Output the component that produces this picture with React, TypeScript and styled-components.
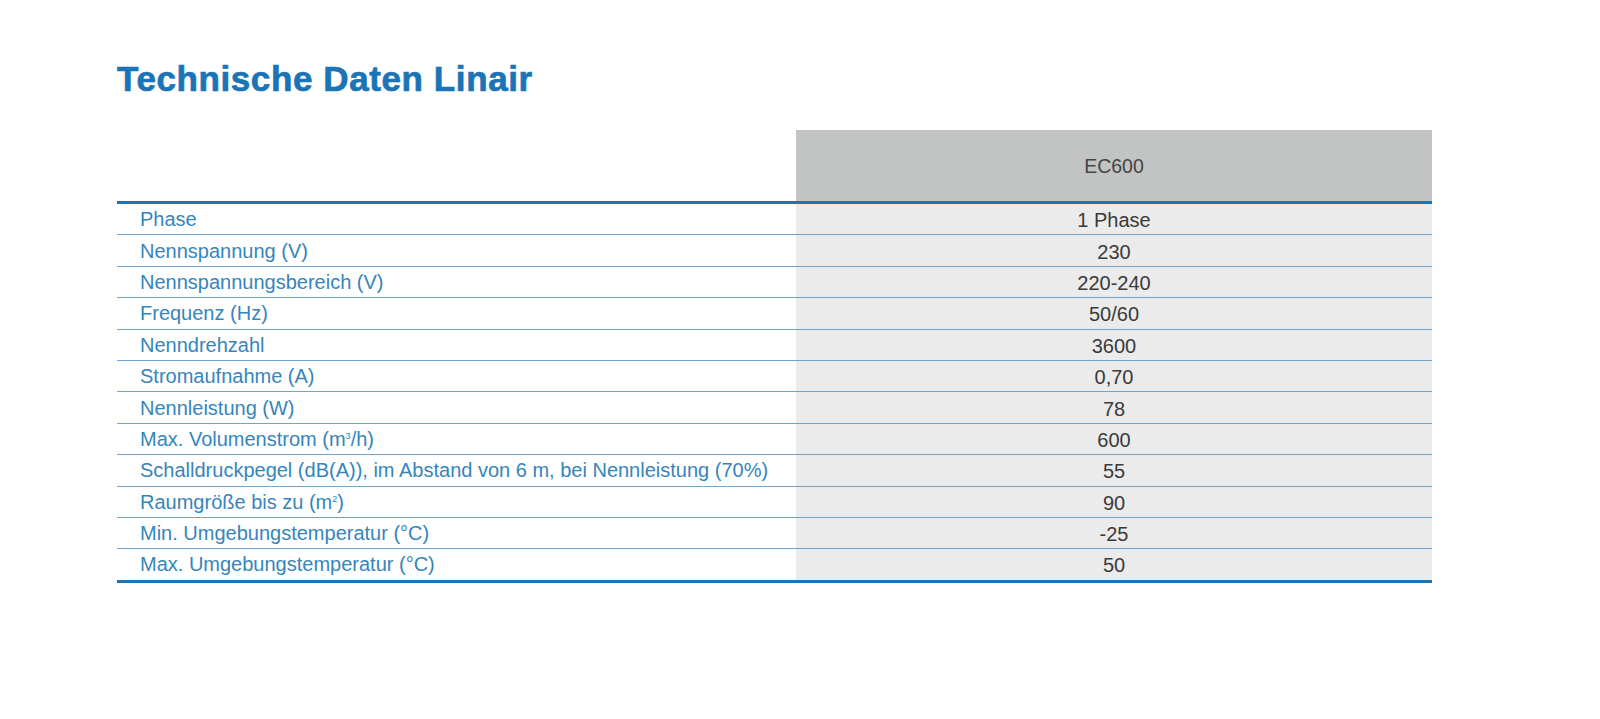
import React from "react";
import styled, { createGlobalStyle } from "styled-components";

const GlobalStyle = createGlobalStyle`
  html, body {
    margin: 0;
    padding: 0;
    background: #ffffff;
  }
  body {
    font-family: "Liberation Sans", Arial, sans-serif;
  }
`;

const Page = styled.div`
  width: 1600px;
  height: 719px;
  padding: 62px 168px 0 117px;
  box-sizing: border-box;
`;

const Title = styled.h1`
  margin: 0 0 35px;
  font-size: 35px;
  line-height: 33px;
  font-weight: 700;
  color: #1a74b6;
  letter-spacing: 0.6px;
  -webkit-text-stroke: 0.7px #1a74b6;
`;

const Table = styled.table`
  width: 1315px;
  border-collapse: collapse;
  table-layout: fixed;
  font-size: 20px;
  line-height: 22px;
`;

const HeadCell = styled.th<{ $filled?: boolean }>`
  height: 71px;
  padding: 0;
  background: ${(p) => (p.$filled ? "#c2c4c4" : "transparent")};
  color: #454545;
  font-weight: 400;
  font-size: 19.5px;
  text-align: center;
  border-bottom: 3px solid #1f72ad;
`;

const Row = styled.tr<{ $last?: boolean }>`
  td {
    border-bottom: ${(p) => (p.$last ? "3px solid #1f72ad" : "1px solid #6fa5cc")};
  }
`;

const Label = styled.td`
  height: 30.4px;
  padding: 0 0 0 23px;
  color: #3685bb;
  font-weight: 400;
  white-space: nowrap;
`;

const Value = styled.td`
  height: 30.4px;
  padding: 2px 0 0;
  box-sizing: border-box;
  background: #ebebeb;
  color: #3a3a3a;
  text-align: center;
`;

const Sup = styled.sup`
  font-size: 9px;
  vertical-align: 7px;
  line-height: 0;
`;

const rows: [React.ReactNode, string][] = [
  ["Phase", "1 Phase"],
  ["Nennspannung (V)", "230"],
  ["Nennspannungsbereich (V)", "220-240"],
  ["Frequenz (Hz)", "50/60"],
  ["Nenndrehzahl", "3600"],
  ["Stromaufnahme (A)", "0,70"],
  ["Nennleistung (W)", "78"],
  [<>Max. Volumenstrom (m<Sup>3</Sup>/h)</>, "600"],
  ["Schalldruckpegel (dB(A)), im Abstand von 6 m, bei Nennleistung (70%)", "55"],
  [<>Raumgröße bis zu (m<Sup>2</Sup>)</>, "90"],
  ["Min. Umgebungstemperatur (°C)", "-25"],
  ["Max. Umgebungstemperatur (°C)", "50"],
];

export default function App() {
  return (
    <>
      <GlobalStyle />
      <Page>
        <Title>Technische Daten Linair</Title>
        <Table>
          <colgroup>
            <col style={{ width: 679 }} />
            <col style={{ width: 636 }} />
          </colgroup>
          <thead>
            <tr>
              <HeadCell />
              <HeadCell $filled>EC600</HeadCell>
            </tr>
          </thead>
          <tbody>
            {rows.map(([label, value], i) => (
              <Row key={i} $last={i === rows.length - 1}>
                <Label>{label}</Label>
                <Value>{value}</Value>
              </Row>
            ))}
          </tbody>
        </Table>
      </Page>
    </>
  );
}
